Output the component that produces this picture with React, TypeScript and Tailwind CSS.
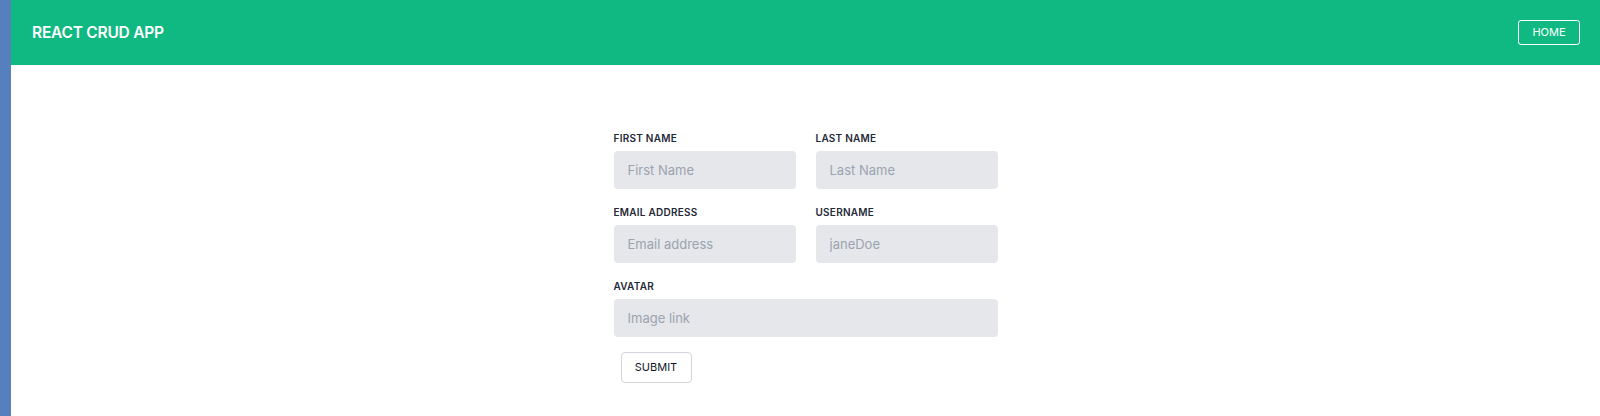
import { useState } from "react";

type Field = {
  name: string;
  label: string;
  placeholder: string;
};

const rows: Field[][] = [
  [
    { name: "firstName", label: "First Name", placeholder: "First Name" },
    { name: "lastName", label: "Last Name", placeholder: "Last Name" },
  ],
  [
    { name: "email", label: "Email Address", placeholder: "Email address" },
    { name: "username", label: "Username", placeholder: "janeDoe" },
  ],
  [{ name: "avatar", label: "Avatar", placeholder: "Image link" }],
];

export default function App() {
  const [values, setValues] = useState<Record<string, string>>({});

  const update = (name: string, value: string) =>
    setValues((prev) => ({ ...prev, [name]: value }));

  return (
    <div className="flex h-[416px] w-full bg-white font-['Inter','Liberation_Sans',Arial,sans-serif]">
      {/* left edge strip */}
      <div className="w-[11px] shrink-0 bg-[#5580bd]" />

      <div className="flex min-w-0 flex-1 flex-col">
        <header className="flex h-[65px] items-center justify-between bg-[#10b981] pl-[21px] pr-[20px]">
          <h1 className="text-[15.5px] font-semibold tracking-[-0.015em] text-white">REACT CRUD APP</h1>
          <button className="flex h-[25px] w-[62px] items-center justify-center rounded-[3px] border border-white text-[11px] text-white">
            HOME
          </button>
        </header>

        <div className="flex justify-center pt-[67px]">
          <form
            className="flex w-[384px] flex-col gap-[17px]"
            onSubmit={(e) => e.preventDefault()}
          >
            {rows.map((row, i) => (
              <div key={i} className="flex gap-5">
                {row.map((field) => (
                  <label key={field.name} className="flex flex-1 flex-col">
                    <span className="mb-[7px] text-[10px] leading-[12px] font-semibold tracking-wide text-[#1f2937] uppercase">
                      {field.label}
                    </span>
                    <input
                      value={values[field.name] ?? ""}
                      onChange={(e) => update(field.name, e.target.value)}
                      placeholder={field.placeholder}
                      className="h-[38px] w-full rounded-[4px] bg-[#e5e7eb] px-[14px] text-[13px] text-gray-700 outline-none placeholder:text-[#9ca3af]"
                    />
                  </label>
                ))}
              </div>
            ))}
            <div className="-mt-[2px] pl-[7px]">
              <button
                type="submit"
                className="flex h-[31px] w-[71px] items-center justify-center rounded-[4px] border border-[#d1d5db] text-[11px] text-[#111827]"
              >
                SUBMIT
              </button>
            </div>
          </form>
        </div>
      </div>
    </div>
  );
}
